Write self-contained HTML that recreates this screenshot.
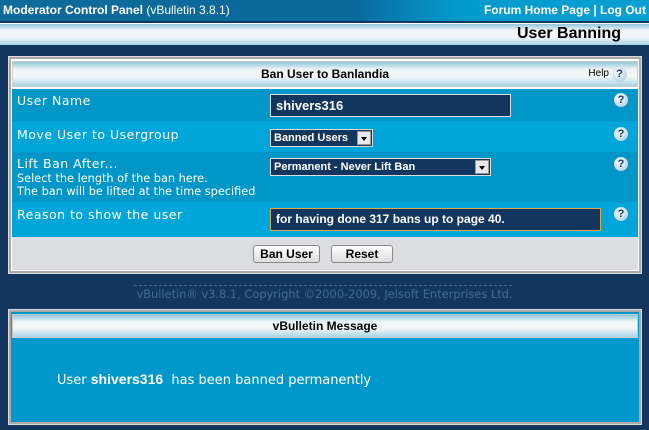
<!DOCTYPE html>
<html><head><style>
*{margin:0;padding:0;box-sizing:border-box}
body{width:649px;height:430px;background:#13365e;font-family:"Liberation Sans",sans-serif;position:relative;overflow:hidden;color:#fff}
.a{position:absolute}
.top{left:0;top:0;width:649px;height:21px;background:linear-gradient(90deg,#0e6a9a 0%,#0a6a9c 55%,#0499cc 70%,#0aa0d2 100%);font-size:12px;font-weight:bold;line-height:21px}
.hdr{background:linear-gradient(#8ec6dc 0%,#eef4f6 30%,#f4f8f9 60%,#a8d4e4 100%)}
.bar{left:0;top:23px;width:649px;height:22px;border-top:1px solid #fff}
.panel{background:#fff;border:2px solid #aaa;outline:1px solid #ddd}
.lbl{font-family:"DejaVu Sans",sans-serif;font-size:12.5px;letter-spacing:.5px;left:17px}
.inp{background:#13365e;border:1px solid #ddd;font-size:11px;font-weight:bold;padding-left:5px;line-height:19px}
.q{width:14px;height:14px;border-radius:50%;background:radial-gradient(circle at 40% 35%,#fff,#9fc4dd);color:#13365e;font-size:11px;font-weight:bold;text-align:center;line-height:14px;left:614px}
.sel{background:#13365e;border:1px solid #ddd;font-size:11px;font-weight:bold;padding-left:3px;line-height:16px}
.arr{position:absolute;right:1px;top:1px;width:14px;height:14px;background:#e8e8e8;border:1px solid #999}
.arr:after{content:"";position:absolute;left:3px;top:5px;border:3px solid transparent;border-top:4px solid #000}
.btn{background:linear-gradient(#fff,#ddd);border:1px solid #888;border-radius:3px;color:#000;font-size:12px;font-weight:bold;text-align:center;line-height:16px}
</style></head><body>
<div class="a top"><span style="position:absolute;left:3px">Moderator Control Panel <span style="font-weight:normal">(vBulletin 3.8.1)</span></span><span style="position:absolute;right:3px">Forum Home Page | Log Out</span></div>
<div class="a bar hdr"><span style="position:absolute;right:28px;top:1px;font-size:16px;font-weight:bold;color:#000">User Banning</span></div>

<div class="a panel" style="left:9px;top:57px;width:632px;height:216px"></div>
<div class="a hdr" style="left:12px;top:61px;width:626px;height:26px;border:1px solid #ccc;color:#000;font-size:12px;font-weight:bold;text-align:center;line-height:24px">Ban User to Banlandia<span style="position:absolute;right:28px;font-size:10px;font-weight:normal">Help</span><span class="a q" style="left:auto;right:10px;top:5px;width:15px;height:15px">?</span></div>
<div class="a" style="left:12px;top:89px;width:626px;height:32px;background:#0096c8"></div>
<div class="a" style="left:12px;top:121px;width:626px;height:31px;background:#00a5d9"></div>
<div class="a" style="left:12px;top:152px;width:626px;height:50px;background:#0096c8"></div>
<div class="a" style="left:12px;top:202px;width:626px;height:35px;background:#00a5d9"></div>
<div class="a" style="left:12px;top:237px;width:626px;height:33px;background:#dcdde0"></div>

<div class="a lbl" style="top:93px">User Name</div>
<div class="a lbl" style="top:127px">Move User to Usergroup</div>
<div class="a lbl" style="top:156px">Lift Ban After...</div>
<div class="a lbl" style="top:172px;font-size:11.3px;letter-spacing:0">Select the length of the ban here.</div>
<div class="a lbl" style="top:185px;font-size:11.3px;letter-spacing:0">The ban will be lifted at the time specified</div>
<div class="a lbl" style="top:207px">Reason to show the user</div>

<div class="a inp" style="left:270px;top:94px;width:241px;height:23px;font-size:13px;line-height:21px">shivers316</div>
<div class="a sel" style="left:270px;top:129px;width:103px;height:18px">Banned Users<span class="arr"></span></div>
<div class="a sel" style="left:270px;top:158px;width:221px;height:18px">Permanent - Never Lift Ban<span class="arr"></span></div>
<div class="a inp" style="left:270px;top:208px;width:331px;height:23px;border-color:#d9a94a;font-size:12px;line-height:21px">for having done 317 bans up to page 40.</div>

<div class="a q" style="top:93px">?</div>
<div class="a q" style="top:127px">?</div>
<div class="a q" style="top:157px">?</div>
<div class="a q" style="top:207px">?</div>

<div class="a btn" style="left:253px;top:245px;width:67px;height:18px">Ban User</div>
<div class="a btn" style="left:331px;top:245px;width:62px;height:18px">Reset</div>

<div class="a" style="left:134px;top:285px;width:378px;border-top:1px dashed #3f6c92"></div>
<div class="a" style="left:0;width:649px;top:287px;text-align:center;font-family:'DejaVu Sans',sans-serif;font-size:11.4px;color:#3f6c92">vBulletin® v3.8.1, Copyright ©2000-2009, Jelsoft Enterprises Ltd.</div>

<div class="a panel" style="left:9px;top:310px;width:632px;height:114px;background:#0098cc"></div>
<div class="a hdr" style="left:12px;top:314px;width:626px;height:24px;border:1px solid #ccc;color:#000;font-size:12px;font-weight:bold;text-align:center;line-height:22px">vBulletin Message</div>
<div class="a" style="left:57px;top:371px;font-family:'DejaVu Sans',sans-serif;font-size:13px">User <b style="font-family:'Liberation Sans',sans-serif;font-size:14px">shivers316</b>&nbsp; has been banned permanently</div>
</body></html>
